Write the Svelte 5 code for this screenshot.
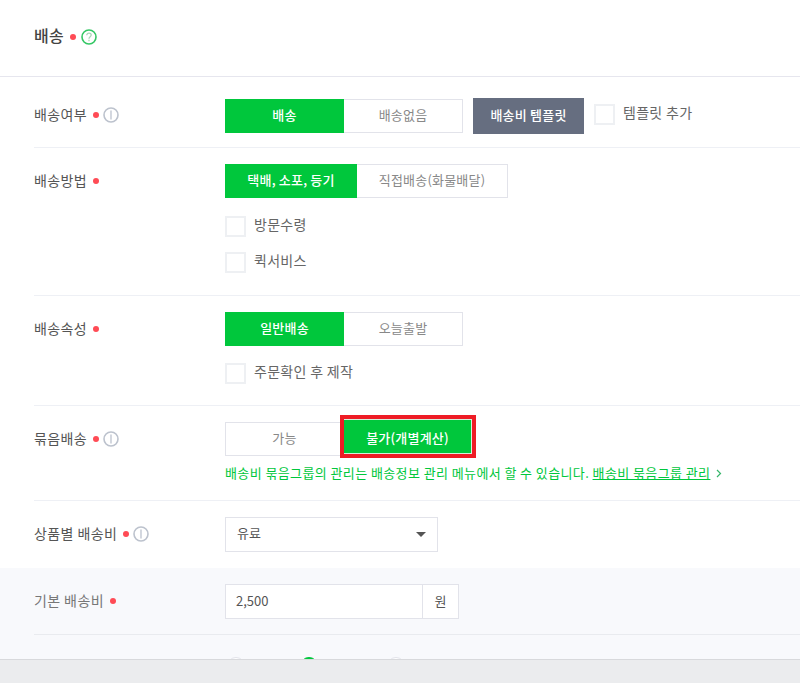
<script>
  const INFO = 'info';
</script>

{#snippet mark()}
  <span class="dot"></span>
{/snippet}

{#snippet info()}
  <svg class="ico" width="16" height="16" viewBox="0 0 16 16" aria-label={INFO}>
    <circle cx="8" cy="8" r="7" fill="none" stroke="#bcc2cd" stroke-width="1.6" />
    <path d="M8 3.6v8.8" stroke="#c9ced8" stroke-width="1.6" fill="none" />
  </svg>
{/snippet}

<div class="page">
  <header class="head">
    <h2>배송</h2>
    {@render mark()}
    <svg class="help" width="16" height="16" viewBox="0 0 16 16">
      <circle cx="8" cy="8" r="7" fill="none" stroke="#35c765" stroke-width="1.6" />
      <path d="M5.8 6.2c0-1.3 1-2.1 2.2-2.1s2.2.8 2.2 2c0 1.7-2.2 1.7-2.2 3.6" fill="none" stroke="#a9d6b8" stroke-width="1.3" />
      <path d="M8 10.8v1.5" stroke="#a9d6b8" stroke-width="1.3" />
    </svg>
  </header>

  <section class="row r1">
    <div class="label">배송여부 {@render mark()} {@render info()}</div>
    <div class="field">
      <div class="line">
        <div class="seg">
          <button class="on">배송</button>
          <button>배송없음</button>
        </div>
        <button class="tpl">배송비 템플릿</button>
        <label class="check tight"><span class="box"></span>템플릿 추가</label>
      </div>
    </div>
  </section>

  <section class="row r2">
    <div class="label">배송방법 {@render mark()}</div>
    <div class="field">
      <div class="seg">
        <button class="on w132">택배, 소포, 등기</button>
        <button class="w151">직접배송(화물배달)</button>
      </div>
      <label class="check first"><span class="box"></span>방문수령</label>
      <label class="check next"><span class="box"></span>퀵서비스</label>
    </div>
  </section>

  <section class="row r3">
    <div class="label">배송속성 {@render mark()}</div>
    <div class="field">
      <div class="seg">
        <button class="on">일반배송</button>
        <button>오늘출발</button>
      </div>
      <label class="check first"><span class="box"></span>주문확인 후 제작</label>
    </div>
  </section>

  <section class="row r4">
    <div class="label">묶음배송 {@render mark()} {@render info()}</div>
    <div class="field">
      <div class="seg">
        <button>가능</button>
        <button class="on marked">불가(개별계산)</button>
      </div>
      <p class="note">
        배송비 묶음그룹의 관리는 배송정보 관리 메뉴에서 할 수 있습니다.
        <a href="#top">배송비 묶음그룹 관리</a>
        <svg class="chev" width="6" height="9" viewBox="0 0 6 9"><path d="M1 1l3.5 3.5L1 8" fill="none" stroke="#35b56a" stroke-width="1.2" /></svg>
      </p>
    </div>
  </section>

  <section class="row r5">
    <div class="label">상품별 배송비 {@render mark()} {@render info()}</div>
    <div class="field">
      <div class="select">유료<span class="caret"></span></div>
    </div>
  </section>

  <div class="shade">
    <section class="row r6">
      <div class="label muted">기본 배송비 {@render mark()}</div>
      <div class="field">
        <div class="price">
          <div class="input">2,500</div>
          <div class="unit">원</div>
        </div>
      </div>
    </section>
    <div class="radios">
      <span class="radio"></span>
      <span class="radio sel"></span>
      <span class="radio"></span>
    </div>
  </div>

  <footer class="foot"></footer>
</div>

<style>
  :global(body) {
    margin: 0;
    background: #fff;
    font-family: "Noto Sans CJK KR", "Liberation Sans", sans-serif;
    font-size: 13px;
    color: #555;
    overflow: hidden;
  }

  .page {
    height: 683px;
    overflow: hidden;
    position: relative;
  }

  .head {
    box-sizing: border-box;
    height: 77px;
    border-bottom: 1px solid #e6e6ee;
    padding: 0 0 3px 34px;
    display: flex;
    align-items: center;
  }
  h2 {
    margin: 0 0 4px;
    font-size: 16px;
    font-weight: 500;
    letter-spacing: 0.4px;
    color: #444;
  }
  .head .dot { margin-left: 6px; margin-top: 0; }
  .help { margin-left: 5px; }

  .row {
    margin-left: 34px;
    display: flex;
    box-sizing: border-box;
    border-bottom: 1px solid #eef0f5;
  }
  .r1 { height: 71px; padding-top: 21px; }
  .r2 { height: 148px; padding-top: 16px; }
  .r3 { height: 110px; padding-top: 16px; }
  .r4 { height: 95px; padding-top: 16px; }
  .r5 { height: 67px; padding-top: 16px; border-bottom: 0; }
  .r6 { height: 67px; padding-top: 16px; border-bottom: 1px solid #e9ebef; }

  .label {
    width: 191px;
    flex: none;
    height: 34px;
    display: flex;
    align-items: center;
    color: #555;
    font-size: 14px;
    letter-spacing: 0.4px;
    padding-bottom: 3px;
    box-sizing: border-box;
  }
  .label.muted { color: #777; }
  .dot {
    width: 6px;
    height: 6px;
    margin-left: 6px;
    margin-top: 3px;
    border-radius: 50%;
    background: #ff4b55;
    flex: none;
  }
  .ico { margin-left: 4px; margin-top: 3px; flex: none; }

  .line { display: flex; align-items: center; }
  .seg { display: flex; }
  button {
    width: 119px;
    height: 34px;
    box-sizing: border-box;
    border: 1px solid #e2e3ea;
    background: #fff;
    color: #888;
    font: inherit;
    font-size: 13px;
    letter-spacing: 0.2px;
    padding: 0 0 4px;
  }
  .seg button + button { border-left: 0; }
  button.on {
    background: #00c73c;
    border-color: #00c73c;
    color: #fff;
    font-weight: 500;
  }
  .w132 { width: 132px; }
  .w151 { width: 151px; }
  .seg .marked {
    width: 128px;
    height: 35px;
    margin-top: -3px;
    padding: 1px 0 0;
    border-top: 1px solid #d5efdd;
    border-right: 1px solid #d5efdd;
    border-bottom: 1px solid #d5efdd;
    outline: 4px solid #ee1c25;
  }
  .tpl {
    width: 111px;
    height: 36px;
    margin-left: 10px;
    background: #666e80;
    border-color: #666e80;
    color: #fff;
    font-weight: 500;
  }

  .check {
    display: flex;
    align-items: flex-start;
    height: 21px;
    line-height: 16px;
    color: #666;
    font-size: 14px;
    letter-spacing: 0.3px;
  }
  .check.tight { margin-left: 10px; margin-top: -3px; }
  .check.first { margin-top: 18px; }
  .r3 .check.first { margin-top: 17px; }
  .check.next { margin-top: 15px; }
  .box {
    box-sizing: border-box;
    width: 21px;
    height: 21px;
    margin-right: 8px;
    border: 2px solid #eef0f3;
    background: #fff;
  }

  .note {
    margin: 8px 0 0;
    font-size: 13px;
    letter-spacing: 0.4px;
    line-height: 18px;
    color: #00c73c;
    white-space: nowrap;
  }
  .note a { color: #00c73c; text-decoration: underline; }
  .chev { margin-left: 2px; }

  .select {
    width: 213px;
    height: 35px;
    box-sizing: border-box;
    border: 1px solid #e2e3ea;
    padding: 0 11px 4px;
    display: flex;
    align-items: center;
    justify-content: space-between;
    font-size: 13px;
    color: #555;
  }
  .caret {
    width: 0;
    height: 0;
    margin-top: 3px;
    border-left: 5px solid transparent;
    border-right: 5px solid transparent;
    border-top: 5px solid #555;
  }

  .shade { background: #f8f9fc; height: 91px; }
  .price { display: flex; height: 35px; }
  .input, .unit {
    box-sizing: border-box;
    border: 1px solid #e2e3ea;
    background: #fff;
    display: flex;
    align-items: center;
    font-size: 13px;
    padding-bottom: 3px;
  }
  .input { width: 198px; padding-left: 10px; color: #555; }
  .unit { width: 36px; justify-content: center; border-left: 0; color: #555; }

  .radios {
    margin: 22px 0 0 227px;
    display: flex;
  }
  .radio {
    width: 18px;
    height: 18px;
    box-sizing: border-box;
    border: 1px solid #e2e3ea;
    border-radius: 50%;
    background: #fff;
    margin-right: 55px;
    flex: none;
  }
  .radio.sel { background: #00c73c; border-color: #00c73c; margin-right: 69px; }

  .foot {
    position: absolute;
    left: 0;
    right: 0;
    bottom: 0;
    box-sizing: border-box;
    height: 24px;
    background: #ebecee;
    border-top: 1px solid #d8d9dc;
  }
</style>
